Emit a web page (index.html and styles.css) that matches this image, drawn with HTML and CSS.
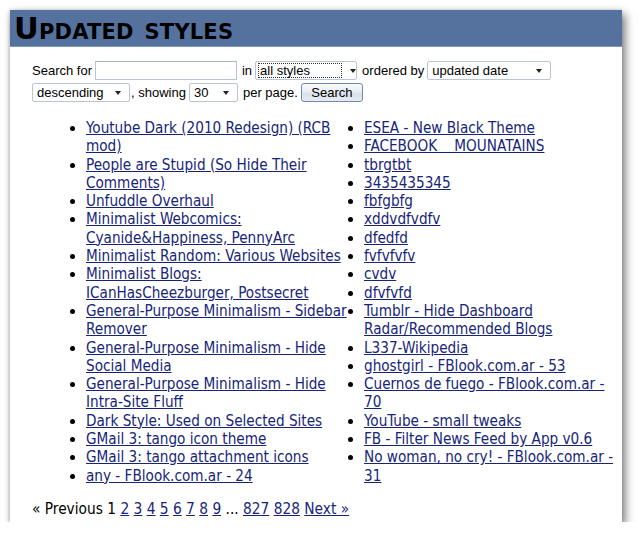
FILE: index.html
```html
<!DOCTYPE html>
<html>
<head>
<meta charset="utf-8">
<link rel="stylesheet" href="styles.css">
</head>
<body>
<div class="window">
  <div class="header"><h1 class="title">Updated styles</h1></div>
  <form class="search">
    <div class="row">
      <span class="lbl">Search for</span>
      <span class="textbox"></span>
      <span class="lbl">in</span>
      <span class="select sel-scope"><span class="val focused">all styles</span><span class="arrow"></span></span>
      <span class="lbl">ordered by</span>
      <span class="select sel-order"><span class="val">updated date</span><span class="arrow"></span></span>
    </div>
    <div class="row">
      <span class="select sel-dir"><span class="val">descending</span><span class="arrow"></span></span>
      <span class="lbl tight">, showing</span>
      <span class="select sel-num"><span class="val">30</span><span class="arrow"></span></span>
      <span class="lbl">per page.</span>
      <span class="button">Search</span>
    </div>
  </form>
  <div class="lists">
    <ul class="col col1">
      <li><a href="#">Youtube Dark (2010 Redesign) (RCB mod)</a></li>
      <li><a href="#">People are Stupid (So Hide Their Comments)</a></li>
      <li><a href="#">Unfuddle Overhaul</a></li>
      <li><a href="#">Minimalist Webcomics: Cyanide&amp;Happiness, PennyArc</a></li>
      <li><a href="#">Minimalist Random: Various Websites</a></li>
      <li><a href="#">Minimalist Blogs: ICanHasCheezburger, Postsecret</a></li>
      <li><a href="#">General-Purpose Minimalism - Sidebar Remover</a></li>
      <li><a href="#">General-Purpose Minimalism - Hide Social Media</a></li>
      <li><a href="#">General-Purpose Minimalism - Hide Intra-Site Fluff</a></li>
      <li><a href="#">Dark Style: Used on Selected Sites</a></li>
      <li><a href="#">GMail 3: tango icon theme</a></li>
      <li><a href="#">GMail 3: tango attachment icons</a></li>
      <li><a href="#">any - FBlook.com.ar - 24</a></li>
    </ul>
    <ul class="col col2">
      <li><a href="#">ESEA - New Black Theme</a></li>
      <li><a href="#">FACEBOOK &nbsp;&nbsp; MOUNATAINS</a></li>
      <li><a href="#">tbrgtbt</a></li>
      <li><a href="#">3435435345</a></li>
      <li><a href="#">fbfgbfg</a></li>
      <li><a href="#">xddvdfvdfv</a></li>
      <li><a href="#">dfedfd</a></li>
      <li><a href="#">fvfvfvfv</a></li>
      <li><a href="#">cvdv</a></li>
      <li><a href="#">dfvfvfd</a></li>
      <li><a href="#">Tumblr - Hide Dashboard Radar/Recommended Blogs</a></li>
      <li><a href="#">L337-Wikipedia</a></li>
      <li><a href="#">ghostgirl - FBlook.com.ar - 53</a></li>
      <li><a href="#">Cuernos de fuego - FBlook.com.ar - 70</a></li>
      <li><a href="#">YouTube - small tweaks</a></li>
      <li><a href="#">FB - Filter News Feed by App v0.6</a></li>
      <li><a href="#">No woman, no cry! - FBlook.com.ar - 31</a></li>
    </ul>
  </div>
  <div class="pager">
    <span>« Previous</span> <span>1</span> <a href="#">2</a> <a href="#">3</a> <a href="#">4</a> <a href="#">5</a> <a href="#">6</a> <a href="#">7</a> <a href="#">8</a> <a href="#">9</a> <span>...</span> <a href="#">827</a> <a href="#">828</a> <a href="#">Next »</a>
  </div>
</div>
</body>
</html>
```

FILE: styles.css
```css
html, body {
  margin: 0;
  padding: 0;
  background: #ffffff;
}
.window {
  margin: 10px 0 0 10px;
  width: 612px;
  height: 512px;
  background: #ffffff;
  box-shadow: 3px 4px 9px rgba(0, 0, 0, 0.55), -1px 0 3px rgba(0, 0, 0, 0.15);
  overflow: hidden;
}
.header {
  height: 36px;
  background: #55729f;
  border-bottom: 1px solid #7f98bd;
}
.title {
  margin: 0;
  padding: 0 0 0 4px;
  font-family: "DejaVu Sans", sans-serif;
  font-weight: bold;
  font-size: 30.5px;
  line-height: 38px;
  font-variant: small-caps;
  letter-spacing: 0.2px;
  color: #000000;
}
.search {
  margin: 14px 0 0 22px;
  font-family: "Liberation Sans", Arial, sans-serif;
  font-size: 13px;
  color: #000;
}
.row {
  display: flex;
  align-items: center;
  height: 19px;
  margin-bottom: 3px;
}
.lbl {
  margin: 0 4px 0 0;
  white-space: nowrap;
}
.lbl.tight {
  margin-left: -1px;
}
.textbox {
  width: 140px;
  height: 17px;
  border: 1px solid #b9c3d3;
  border-top-color: #a6b1c4;
  margin: 0 5px 0 -1px;
}
.select {
  display: flex;
  align-items: center;
  height: 17px;
  border: 1px solid #b9c4d6;
  border-radius: 2px;
  margin-right: 5px;
  position: relative;
  background: #fff;
}
.select .val {
  flex: 1;
  padding: 0 3px;
  line-height: 15px;
  height: 15px;
  margin-left: 1px;
}
.select .val.focused {
  outline: 1px dotted #333;
  outline-offset: -1px;
  margin: 0 0 0 2px;
  padding: 0 2px;
  flex: 0 0 80px;
}
.select .arrow {
  width: 22px;
  height: 15px;
  position: relative;
}
.select .arrow::after {
  content: "";
  position: absolute;
  left: 8px;
  top: 6px;
  border-left: 3.5px solid transparent;
  border-right: 3.5px solid transparent;
  border-top: 4px solid #222;
}
.sel-scope { width: 100px; margin-left: -1px; }
.sel-order { width: 122px; margin-left: -1px; }
.sel-dir { width: 96px; margin-right: 2px; }
.sel-num { width: 47px; margin-left: -1px; }
.button {
  display: inline-flex;
  align-items: center;
  justify-content: center;
  width: 60px;
  height: 17px;
  border: 1px solid #7189ad;
  border-radius: 3px;
  background: linear-gradient(#fbfcfd, #e6eaf0 50%, #d9dfe8 51%, #e8ecf2);
  font-size: 13px;
  color: #000;
  margin-left: -1px;
}
.lists {
  display: flex;
  margin: 17px 0 0 0;
  padding-left: 76px;
  font-family: "DejaVu Sans Condensed", "DejaVu Sans", sans-serif;
  font-size: 15.15px;
  line-height: 18.3px;
}
.col {
  margin: 0;
  padding: 0;
  list-style: disc;
}
.col1 {
  width: 266px;
  margin-right: 12px;
}
.col2 {
  width: 256px;
}
a {
  color: #16257a;
  text-decoration: underline;
}
.pager {
  margin: 15px 0 0 22px;
  font-family: "DejaVu Sans Condensed", "DejaVu Sans", sans-serif;
  font-size: 15.3px;
  line-height: 18px;
  color: #000;
}
```
